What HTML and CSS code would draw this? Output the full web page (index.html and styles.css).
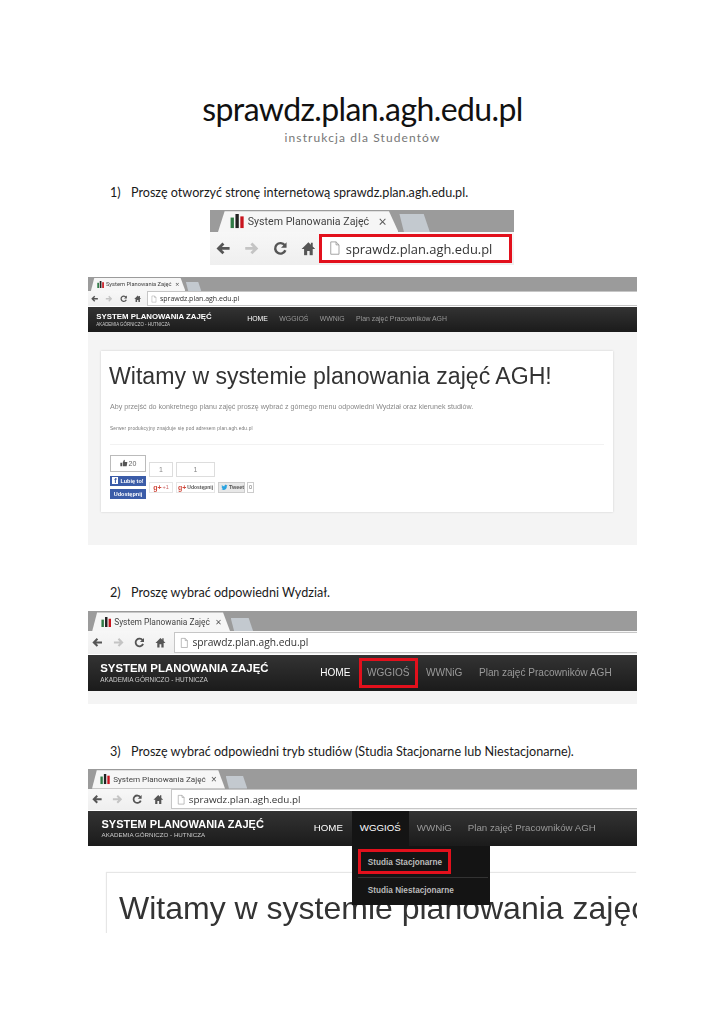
FILE: index.html
```html
<!DOCTYPE html>
<html lang="pl">
	<head>
		<meta charset="utf-8" />
		<meta name="viewport" content="width=device-width, initial-scale=1.0" />
		<title>sprawdz.plan.agh.edu.pl</title>
		<link rel="stylesheet" href="styles.css">
	</head>

	<body>
		<!-- ikony wspolne dla wszystkich zrzutow -->
		<svg class="sprites" aria-hidden="true">
			<symbol id="i-favicon" viewBox="0 0 12 12">
				<rect x="0.500" y="3" width="2.800" height="9" fill="#2f7a45" />
				<rect x="4.600" y="0" width="2.800" height="12" fill="#222" />
				<rect x="8.700" y="2" width="2.800" height="10" fill="#c8141e" />
			</symbol>
			<symbol id="i-arrow" viewBox="0 0 24 24">
				<path d="M22 12H5M12 4l-8 8 8 8" fill="none" stroke="currentColor" stroke-width="4.5" />
			</symbol>
			<symbol id="i-reload" viewBox="0 0 24 24">
				<path d="M20 15a8.500 8.500 0 1 1-1-8" fill="none" stroke="currentColor" stroke-width="4" />
				<path d="M22 2v9h-9z" fill="currentColor" />
			</symbol>
			<symbol id="i-home" viewBox="0 0 24 24">
				<path d="M12 2L1 13h4v10h5v-7h4v7h5V13h4l-4-4V3h-3v3z" fill="currentColor" />
			</symbol>
			<symbol id="i-page" viewBox="0 0 20 24">
				<path d="M3 1.500h9l5 5v16H3zM12 1.500v5h5" fill="none" stroke="#9a9a9a" stroke-width="1.500" />
			</symbol>
			<symbol id="i-thumb" viewBox="0 0 24 24">
				<path d="M1 11h5v11H1zM8 11l4-9c3 0 3 3 2 7h8l-2 13H8z" fill="currentColor" />
			</symbol>
			<symbol id="i-bird" viewBox="0 0 24 24">
				<path d="M23 5l-3 1 2-3-3 1c-3-3-8-1-7 4-4 0-7-2-9-5-1 3 0 5 2 7l-3-1c0 3 2 4 4 5H3c1 2 3 3 5 3-2 2-4 2-7 2 10 5 20-1 19-12z" fill="currentColor" />
			</symbol>
		</svg>

		<main class="page">
			<h1 class="doc-title">sprawdz.plan.agh.edu.pl</h1>
			<p class="doc-subtitle">instrukcja dla Studentów</p>

			<p class="step"><span class="step-nr">1)</span>Proszę otworzyć stronę internetową sprawdz.plan.agh.edu.pl.</p>

			<div class="shot shot-address">
				<div class="tabstrip">
					<div class="tab">
						<svg class="favicon"><use href="#i-favicon" /></svg>
						<span class="tab-title">System Planowania Zajęć</span>
						<span class="tab-close">×</span>
					</div>
					<div class="new-tab"></div>
				</div>
				<div class="toolbar">
					<div class="nav-buttons">
						<svg class="btn"><use href="#i-arrow" /></svg>
						<svg class="btn btn-forward"><use href="#i-arrow" /></svg>
						<svg class="btn"><use href="#i-reload" /></svg>
						<svg class="btn"><use href="#i-home" /></svg>
					</div>
					<div class="address address-marked">
						<svg class="page-icon"><use href="#i-page" /></svg>
						<span>sprawdz.plan.agh.edu.pl</span>
					</div>
				</div>
			</div>

			<div class="shot shot-home">
				<div class="tabstrip">
					<div class="tab">
						<svg class="favicon"><use href="#i-favicon" /></svg>
						<span class="tab-title">System Planowania Zajęć</span>
						<span class="tab-close">×</span>
					</div>
					<div class="new-tab"></div>
				</div>
				<div class="toolbar">
					<div class="nav-buttons">
						<svg class="btn"><use href="#i-arrow" /></svg>
						<svg class="btn btn-forward"><use href="#i-arrow" /></svg>
						<svg class="btn"><use href="#i-reload" /></svg>
						<svg class="btn"><use href="#i-home" /></svg>
					</div>
					<div class="address">
						<svg class="page-icon"><use href="#i-page" /></svg>
						<span>sprawdz.plan.agh.edu.pl</span>
					</div>
				</div>
				<nav class="navbar">
					<div class="brand">
						<strong>SYSTEM PLANOWANIA ZAJĘĆ</strong>
						<small>AKADEMIA GÓRNICZO - HUTNICZA</small>
					</div>
					<a class="nav-link nav-active">HOME</a>
					<a class="nav-link">WGGIOŚ</a>
					<a class="nav-link">WWNiG</a>
					<a class="nav-link">Plan zajęć Pracowników AGH</a>
				</nav>
				<div class="site-body">
					<section class="card">
						<h2 class="card-title">Witamy w systemie planowania zajęć AGH!</h2>
						<p class="card-lead">Aby przejść do konkretnego planu zajęć proszę wybrać z górnego menu odpowiedni Wydział oraz kierunek studiów.</p>
						<p class="card-note">Serwer produkcyjny znajduje się pod adresem plan.agh.edu.pl</p>
						<hr class="card-line" />
						<div class="social">
							<div class="social-col">
								<div class="count count-big"><svg class="thumb"><use href="#i-thumb" /></svg>20</div>
								<div class="fb-btn"><span class="fb-logo">f</span>Lubię to!</div>
								<div class="fb-btn fb-share">Udostępnij</div>
							</div>
							<div class="social-col social-low">
								<div class="count count-plus">1</div>
								<div class="gp-btn"><b>g+</b>+1</div>
							</div>
							<div class="social-col social-low">
								<div class="count count-share">1</div>
								<div class="gp-btn gp-share"><b>g+</b>Udostępnij</div>
							</div>
							<div class="tweet-row">
								<div class="tweet-btn"><svg class="bird"><use href="#i-bird" /></svg>Tweet</div>
								<div class="tweet-count">0</div>
							</div>
						</div>
					</section>
				</div>
			</div>

			<p class="step step-far"><span class="step-nr">2)</span>Proszę wybrać odpowiedni Wydział.</p>

			<div class="shot shot-faculty">
				<div class="tabstrip">
					<div class="tab">
						<svg class="favicon"><use href="#i-favicon" /></svg>
						<span class="tab-title">System Planowania Zajęć</span>
						<span class="tab-close">×</span>
					</div>
					<div class="new-tab"></div>
				</div>
				<div class="toolbar">
					<div class="nav-buttons">
						<svg class="btn"><use href="#i-arrow" /></svg>
						<svg class="btn btn-forward"><use href="#i-arrow" /></svg>
						<svg class="btn"><use href="#i-reload" /></svg>
						<svg class="btn"><use href="#i-home" /></svg>
					</div>
					<div class="address">
						<svg class="page-icon"><use href="#i-page" /></svg>
						<span>sprawdz.plan.agh.edu.pl</span>
					</div>
				</div>
				<nav class="navbar">
					<div class="brand">
						<strong>SYSTEM PLANOWANIA ZAJĘĆ</strong>
						<small>AKADEMIA GÓRNICZO - HUTNICZA</small>
					</div>
					<a class="nav-link nav-active">HOME</a>
					<a class="nav-link nav-marked">WGGIOŚ</a>
					<a class="nav-link">WWNiG</a>
					<a class="nav-link">Plan zajęć Pracowników AGH</a>
				</nav>
				<div class="site-body"></div>
			</div>

			<p class="step step-far"><span class="step-nr">3)</span>Proszę wybrać odpowiedni tryb studiów (Studia Stacjonarne lub Niestacjonarne).</p>

			<div class="shot shot-mode">
				<div class="tabstrip">
					<div class="tab">
						<svg class="favicon"><use href="#i-favicon" /></svg>
						<span class="tab-title">System Planowania Zajęć</span>
						<span class="tab-close">×</span>
					</div>
					<div class="new-tab"></div>
				</div>
				<div class="toolbar">
					<div class="nav-buttons">
						<svg class="btn"><use href="#i-arrow" /></svg>
						<svg class="btn btn-forward"><use href="#i-arrow" /></svg>
						<svg class="btn"><use href="#i-reload" /></svg>
						<svg class="btn"><use href="#i-home" /></svg>
					</div>
					<div class="address">
						<svg class="page-icon"><use href="#i-page" /></svg>
						<span>sprawdz.plan.agh.edu.pl</span>
					</div>
				</div>
				<nav class="navbar">
					<div class="brand">
						<strong>SYSTEM PLANOWANIA ZAJĘĆ</strong>
						<small>AKADEMIA GÓRNICZO - HUTNICZA</small>
					</div>
					<a class="nav-link nav-active">HOME</a>
					<div class="nav-open">
						<a class="nav-link nav-active">WGGIOŚ</a>
						<div class="dropdown">
							<a class="dropdown-item dropdown-marked">Studia Stacjonarne</a>
							<a class="dropdown-item">Studia Niestacjonarne</a>
						</div>
					</div>
					<a class="nav-link">WWNiG</a>
					<a class="nav-link">Plan zajęć Pracowników AGH</a>
				</nav>
				<div class="site-body site-white">
					<section class="card card-large">
						<h2 class="card-title">Witamy w systemie planowania zajęć</h2>
					</section>
				</div>
			</div>
		</main>
	</body>
</html>
```

FILE: styles.css
```css
body {
	margin: 0;
	background: #fff;
	color: #1a1a1a;
	font-family: "Lato", sans-serif;
}

.sprites {
	display: none;
}

.page {
	padding: 88px 0 91px;
}

.doc-title {
	margin: 0 0 1px;
	text-align: center;
	font-size: 32px;
	font-weight: 400;
	line-height: 41px;
	letter-spacing: -0.6px;
	color: #111;
}

.doc-subtitle {
	margin: 0;
	text-align: center;
	font-size: 12px;
	line-height: 16px;
	letter-spacing: 1.1px;
	color: #777;
}

.step {
	display: flex;
	margin: 37px 0 0 110px;
	font-size: 12.6px;
	line-height: 20px;
}

.step-far {
	margin-top: 38px;
}

.step-nr {
	width: 21px;
}

/* zrzuty ekranu - wszystko w em, zeby skalowac przez font-size */
.shot {
	display: flex;
	flex-direction: column;
	width: 549px;
	margin: 8px 0 0 88px;
	overflow: hidden;
	font-family: "Open Sans", sans-serif;
	filter: blur(0.45px);
}

.shot-address {
	width: 304px;
	height: 56px;
	margin: 7px 0 0 210px;
	font-size: 19px;
}

.shot-home {
	height: 268px;
	margin-top: 11px;
	font-size: 9.6px;
}

.shot-faculty {
	height: 93px;
	font-size: 14px;
}

.shot-mode {
	height: 164px;
	margin-top: 7px;
	font-size: 13.5px;
}

.tabstrip {
	display: flex;
	flex: none;
	align-items: flex-end;
	height: 1.45em;
	padding-left: 0.3em;
	background: #9b9b9b;
}

.shot-address .tabstrip {
	height: 1.16em;
	padding-left: 0.42em;
}

.tab {
	display: flex;
	flex: none;
	align-items: center;
	width: 9.85em;
	height: 1.35em;
	padding: 0 0.62em;
	box-sizing: border-box;
	background: #f6f6f6;
	clip-path: polygon(0 100%, 0.35em 0, calc(100% - 0.5em) 0, 100% 100%);
}

.shot-address .tab {
	width: 9.5em;
	height: 1.1em;
}

.favicon {
	flex: none;
	width: 0.75em;
	height: 0.75em;
	margin-right: 0.2em;
}

.tab-title {
	flex: 1;
	min-width: 0;
	overflow: hidden;
	white-space: nowrap;
	font-family: "Roboto", sans-serif;
	font-size: 0.6em;
	color: #444;
}

.shot-address .tab-title {
	font-size: 0.56em;
}

.tab-close {
	margin-left: 0.2em;
	font-size: 0.75em;
	color: #555;
}

.new-tab {
	flex: none;
	width: 1.6em;
	height: 0.95em;
	margin-left: 0.05em;
	background: #c3c9cf;
	clip-path: polygon(0 0, 80% 0, 100% 100%, 15% 100%);
}

.toolbar {
	display: flex;
	flex: none;
	align-items: center;
	height: 1.6em;
	background: linear-gradient(#f7f7f7, #efefef);
}

.shot-address .toolbar {
	height: 1.74em;
}

.nav-buttons {
	display: flex;
	flex: none;
	justify-content: space-between;
	width: 5.27em;
	padding: 0 0.57em 0 0.3em;
	color: #555;
}

.shot-address .nav-buttons {
	padding-right: 0.33em;
}

.btn {
	width: 0.78em;
	height: 0.78em;
}

.btn-forward {
	color: #c4c4c4;
	transform: scaleX(-1);
}

.address {
	display: flex;
	flex: 1;
	align-items: center;
	min-width: 0;
	height: 1.35em;
	padding-left: 0.35em;
	border: 1px solid #c6c6c6;
	border-right: none;
	background: #fff;
	white-space: nowrap;
	color: #333;
}

.address span {
	font-size: 0.73em;
}

.page-icon {
	flex: none;
	width: 0.62em;
	height: 0.85em;
	margin-right: 0.28em;
}

.address-marked {
	height: 1.2em;
	margin-right: 5px;
	border: none;
	outline: 3px solid #e2101c;
}

.shot-address .address span {
	font-size: 0.68em;
}

.navbar {
	display: flex;
	flex: none;
	align-items: center;
	height: 2.57em;
	margin-top: 1px;
	padding-left: 0.87em;
	background: linear-gradient(#333, #1b1b1b);
	font-family: "Liberation Sans", sans-serif;
}

.shot-mode .navbar {
	padding-left: 1em;
}

.brand {
	display: flex;
	flex-direction: column;
	width: 15.13em;
	color: #fff;
}

.brand strong {
	font-size: 0.817em;
	line-height: 1.2em;
	white-space: nowrap;
}

.brand small {
	font-size: 0.46em;
	line-height: 1.2em;
	white-space: nowrap;
	color: #ccc;
}

.nav-link {
	display: block;
	padding: 0 0.82em;
	font-size: 0.72em;
	line-height: 2.95em;
	white-space: nowrap;
	color: #999;
}

.nav-active {
	color: #fff;
}

.nav-marked {
	outline: 3px solid #e2101c;
	outline-offset: -3px;
}

.nav-open {
	position: relative;
	align-self: stretch;
	margin-left: 1px;
	background: #141414;
}

.nav-open .nav-link {
	line-height: 3.55em;
}

.dropdown {
	position: absolute;
	top: 100%;
	left: 0;
	z-index: 1;
	width: 138px;
	height: 59px;
	padding: 3px 5px 0 6px;
	box-sizing: border-box;
	background: #141414;
}

.dropdown-item {
	display: block;
	height: 25px;
	margin-bottom: 3px;
	padding-left: 10px;
	border-top: 1px solid transparent;
	font-size: 8.2px;
	font-weight: 700;
	line-height: 25px;
	white-space: nowrap;
	color: #bbb;
}

.dropdown-marked {
	width: 93px;
	box-sizing: border-box;
	outline: 3px solid #e2101c;
	outline-offset: -3px;
}

.dropdown-item + .dropdown-item {
	width: 120px;
	border-top-color: #333;
}

.site-body {
	flex: 1;
	padding: 19px 24px 0 13px;
	background: #f4f4f4;
	font-family: "Liberation Sans", sans-serif;
}

.site-white {
	padding: 27px 0 0 19px;
	background: #fff;
}

.card {
	height: 161px;
	padding: 8px 9px;
	box-sizing: border-box;
	background: #fff;
	box-shadow: 0 0 2px #ccc;
}

.card-title {
	margin: 0 0 0 -1px;
	font-size: 23.1px;
	font-weight: 400;
	line-height: 34px;
	white-space: nowrap;
	color: #333;
}

.card-lead {
	margin: 7px 0 0;
	font-size: 7.1px;
	line-height: 14px;
	white-space: nowrap;
	color: #888;
}

.card-note {
	margin: 11px 0 0;
	font-size: 4.75px;
	line-height: 8px;
	letter-spacing: 0.2px;
	white-space: nowrap;
	color: #777;
}

.card-line {
	margin: 11px 0 0;
	border: none;
	border-top: 1px solid #f2f2f2;
}

.social {
	display: flex;
	gap: 3px;
	margin-top: 10px;
}

.social-col {
	display: flex;
	flex-direction: column;
	gap: 4px;
}

.social-low {
	gap: 5px;
	margin-top: 7px;
}

.count {
	display: flex;
	align-items: center;
	justify-content: center;
	height: 15px;
	box-sizing: border-box;
	border: 1px solid #ddd;
	font-size: 7px;
	color: #888;
}

.count-big {
	width: 36px;
	height: 17px;
	border-color: #bbb;
	color: #666;
}

.count-plus {
	width: 24px;
}

.count-share {
	width: 39px;
}

.thumb {
	width: 8px;
	height: 8px;
	margin-right: 1px;
	color: #555;
}

.fb-btn {
	display: flex;
	align-items: center;
	justify-content: center;
	width: 36px;
	height: 10px;
	background: #3b5ca8;
	font-size: 5.5px;
	font-weight: 700;
	white-space: nowrap;
	color: #fff;
}

.fb-share {
	margin-top: -1px;
}

.fb-logo {
	width: 6px;
	margin-right: 2px;
	background: #fff;
	font-size: 7px;
	line-height: 7px;
	text-align: center;
	color: #3b5ca8;
}

.gp-btn {
	display: flex;
	align-items: center;
	justify-content: center;
	height: 11px;
	box-sizing: border-box;
	border: 1px solid #e6e6e6;
	font-size: 5.5px;
	white-space: nowrap;
	color: #c66;
}

.gp-btn b {
	margin-right: 1px;
	font-size: 7px;
	color: #d0493c;
}

.gp-share {
	font-size: 5px;
	font-weight: 700;
	color: #555;
}

.tweet-row {
	display: flex;
	gap: 2px;
	height: 11px;
	margin-top: 27px;
}

.tweet-btn {
	display: flex;
	align-items: center;
	width: 27px;
	padding-left: 2px;
	box-sizing: border-box;
	border: 1px solid #ccc;
	background: #e8e8e8;
	font-size: 5.5px;
	font-weight: 700;
	color: #555;
}

.bird {
	flex: none;
	width: 7px;
	height: 7px;
	margin-right: 1px;
	color: #2aa3e0;
}

.tweet-count {
	width: 7px;
	box-sizing: border-box;
	border: 1px solid #ccc;
	font-size: 5.5px;
	line-height: 9px;
	text-align: center;
	color: #666;
}

.card-large {
	height: 100px;
	padding: 13px 0 0 12px;
	box-shadow: -1px -1px 1px #e6e6e6;
}

.card-large .card-title {
	margin: 0;
	font-size: 32px;
	line-height: 44px;
}
```
